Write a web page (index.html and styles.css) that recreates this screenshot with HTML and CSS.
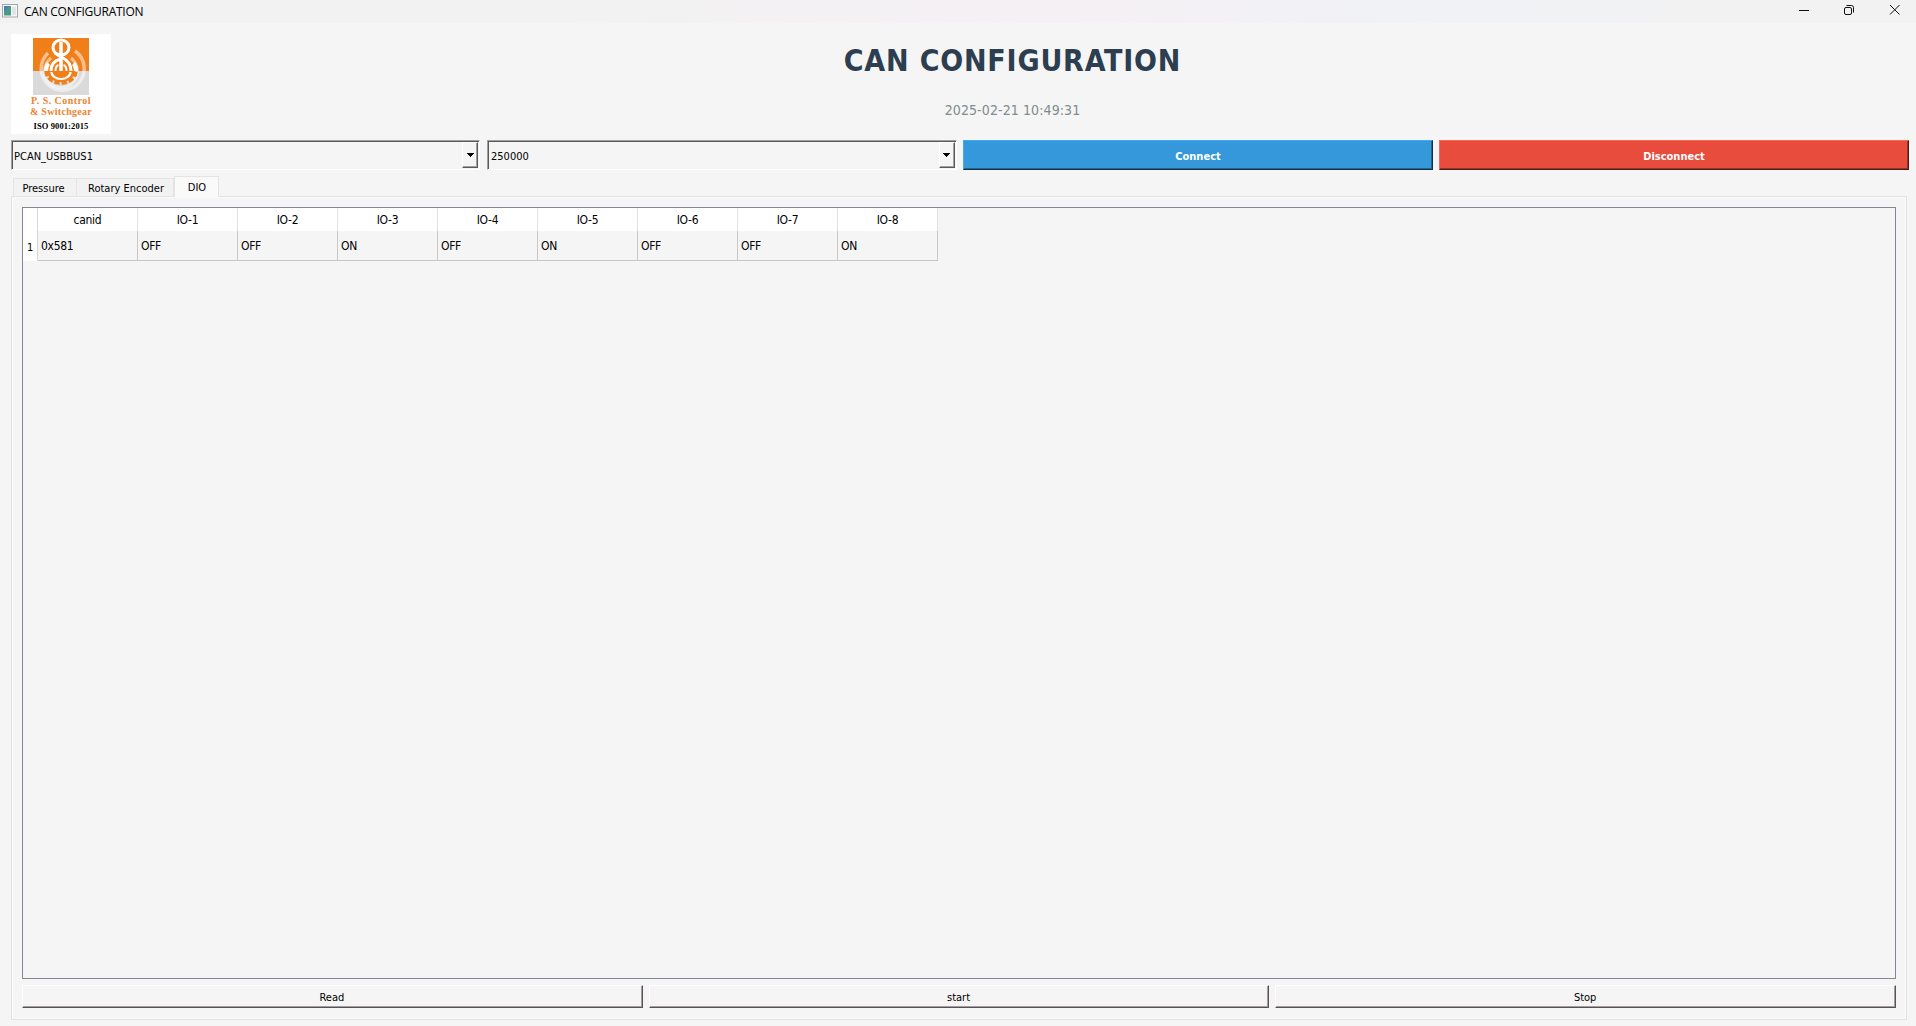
FILE: index.html
```
<!DOCTYPE html>
<html lang="en">
<head>
<meta charset="utf-8">
<title>CAN CONFIGURATION</title>
<link rel="stylesheet" href="styles.css">
</head>
<body>
<header class="titlebar">
  <svg class="app-icon" width="16" height="14" viewBox="0 0 16 14"><rect x=".5" y=".5" width="15" height="12.500" fill="#f7f7f7" stroke="#a3a8ad"/><rect x="2" y="2" width="7" height="9.500" fill="#4b9a86"/><path d="M2 2h5l-5 6z" fill="#4a7fb0"/><rect x="10" y="3" width="4" height="8" fill="#e0e4e2"/></svg>
  <span class="window-title">CAN CONFIGURATION</span>
  <svg class="controls" width="104" height="14" viewBox="0 0 104 14" fill="none" stroke="#111"><path d="M0 6.500h10"/><rect x="45.500" y="3.500" width="7" height="7" rx="1.500"/><path d="M47.500 1.500h5a2 2 0 0 1 2 2v5"/><path d="M91 1l9.500 9.500M100.500 1L91 10.500"/></svg>
</header>
<section class="banner">
  <div class="logo">
    <svg class="emblem" width="56" height="57" viewBox="0 0 56 57" fill="none">
      <path fill="#f07f1a" d="M0 0h56v33H0z"/><path fill="#dadada" d="M0 33h56v24H0z"/>
      <path d="M15 15a21.500 21.500 0 1 0 27-2" stroke="#fff" stroke-opacity=".5" stroke-width="3.500"/>
      <path d="M18 20a16.500 16.500 0 1 0 20 0" stroke="#fff" stroke-opacity=".5" stroke-width="3"/>
      <path d="M14 33a14 11 0 0 0 28 0z" fill="#f07f1a"/>
      <path d="M13.500 33a14.500 11.500 0 0 0 29 0" stroke="#f07f1a" stroke-width="4.500" stroke-dasharray="5 2"/>
      <path d="M13 33q0-5 2.500-7.500M43 33q0-5-2.500-7.500" stroke="#fff" stroke-width="4"/>
      <path d="M18.500 34a9.500 7 0 0 0 19 0" stroke="#fff" stroke-width="2.200"/>
      <ellipse cx="28" cy="9.500" rx="8" ry="7.500" stroke="#fff" stroke-width="3"/>
      <path d="M28 4v29" stroke="#fff" stroke-width="3.500"/>
      <path d="M22 15q4 3 8 5 8 4 8 13M28 21q-10 2-10 12" stroke="#fff" stroke-width="3"/>
      <path d="M22.500 33q0-5 3-6M33.500 33q0-5-3-6" stroke="#fff" stroke-width="2"/>
    </svg>
    <div class="brand"><span>P. S. Control</span><span class="second-line">&amp; Switchgear</span></div>
    <div class="iso">ISO 9001:2015</div>
  </div>
  <div class="heading"><h1><span>CAN CONFIGURATION</span></h1><time><span>2025-02-21 10:49:31</span></time></div>
</section>
<section class="connection">
  <div class="combo port"><span>PCAN_USBBUS1</span><i class="drop"><svg width="7" height="4" viewBox="0 0 7 4"><path d="M0 0h7v1H6v1H5v1H4v1H3V3H2V2H1V1H0z"/></svg></i></div>
  <div class="combo baud"><span>250000</span><i class="drop"><svg width="7" height="4" viewBox="0 0 7 4"><path d="M0 0h7v1H6v1H5v1H4v1H3V3H2V2H1V1H0z"/></svg></i></div>
  <button class="connect"><span>Connect</span></button>
  <button class="disconnect"><span>Disconnect</span></button>
</section>
<nav class="tabs"><div class="tab pressure"><span>Pressure</span></div><div class="tab rotary"><span>Rotary Encoder</span></div><div class="tab active"><span>DIO</span></div></nav>
<main class="pane">
  <div class="table-frame">
    <table>
      <thead><tr><th class="corner"></th><th><span>canid</span></th><th><span>IO-1</span></th><th><span>IO-2</span></th><th><span>IO-3</span></th><th><span>IO-4</span></th><th><span>IO-5</span></th><th><span>IO-6</span></th><th><span>IO-7</span></th><th><span>IO-8</span></th></tr></thead>
      <tbody><tr><th class="corner"><span>1</span></th><td>0x581</td><td>OFF</td><td>OFF</td><td>ON</td><td>OFF</td><td>ON</td><td>OFF</td><td>OFF</td><td>ON</td></tr></tbody>
    </table>
  </div>
  <div class="actions"><button><span>Read</span></button><button><span>start</span></button><button><span>Stop</span></button></div>
</main>
</body>
</html>
```
FILE: styles.css
```
* { box-sizing: border-box; }
body {
  margin: 0; height: 1026px; overflow: hidden; display: flex; flex-direction: column;
  background: #f5f5f5; color: #000;
  font: 11px/14px "DejaVu Sans Condensed", "DejaVu Sans", sans-serif; font-stretch: condensed;
}
.titlebar { height: 23px; display: flex; align-items: flex-start; padding: 4px 13px 0 2px; background: linear-gradient(90deg, #f2f2f2 0 30%, #f5f0f4 55%, #f0f2f6 75%, #f2f2f2 90%); }
.window-title { font: 12px/15px "Open Sans", "Noto Sans", sans-serif; margin-left: 6px; letter-spacing: -.25px; }
.controls { margin-left: auto; }
.banner { height: 111px; padding: 11px 7px 0 11px; display: flex; }
.logo { width: 100px; height: 100px; background: #fff; padding-top: 4px; display: flex; flex-direction: column; align-items: center; font-family: "Liberation Serif", serif; font-weight: bold; }
.emblem { flex: none; }
.brand { color: #ee8430; font-size: 10px; line-height: 11px; display: flex; flex-direction: column; align-items: center; letter-spacing: .45px; }
.second-line { letter-spacing: .3px; }
.iso { font-size: 8.5px; line-height: 9px; margin-top: 5px; letter-spacing: .1px; }
.heading { flex: 1; display: flex; flex-direction: column; align-items: center; padding-left: 5px; }
h1 { margin: 9px 0 0; color: #2c3e50; font-size: 30px; line-height: 36px; letter-spacing: .8px; }
time { margin-top: 21px; font-size: 14px; line-height: 20px; color: #7f8c8d; letter-spacing: .1px; }
.connection { margin-top: 6px; padding: 0 7px 0 11px; display: grid; grid-template-columns: repeat(4, 1fr); gap: 6px; height: 30px; }
.combo { display: flex; align-items: center; justify-content: space-between; border: 1px solid; border-color: #a0a0a0 #fff #fff #a0a0a0; box-shadow: inset 1px 1px #5a5a5a; padding: 1px 1px 1px 2px; }
.combo span { padding-top: 3px; }
.combo.port { margin-right: 1px; }
.combo.baud { padding-left: 3px; }
.drop { width: 16px; height: 26px; display: grid; place-items: center; padding-right: 1px; border: 1px solid; border-color: #fff #5a5a5a #5a5a5a #fff; box-shadow: inset -1px -1px #a0a0a0; }
.port .drop { padding-right: 0; }
button { font: inherit; color: #000; background: #f5f5f5; padding: 2px 1px 0 0; border: 1px solid; border-color: #fff #5a5055 #5a5055 #fff; box-shadow: inset -1px -1px #a0a0a0; }
.connect, .disconnect { color: #fff; font-weight: bold; padding: 3px 0 0; }
.connect { background: #3498db; border-color: #3eabf5 #142f42 #142f42 #3eabf5; box-shadow: inset -1px -1px #22658f; }
.disconnect { background: #e74c3c; border-color: #ff6455 #4a1a16 #4a1a16 #ff6455; box-shadow: inset -1px -1px #9b3328; }
.tabs { height: 26px; padding-left: 13px; display: flex; align-items: flex-end; }
.tab { height: 18px; display: grid; place-items: center; padding-top: 2px; border: 1px solid #e4e4e4; border-width: 1px 1px 0 0; background: #f2f2f2; }
.pressure { width: 64px; border-left-width: 1px; padding-right: 3px; }
.rotary { width: 97px; padding-left: 2px; }
.active { width: 45px; height: 21px; margin-bottom: -1px; border-left-width: 1px; background: #fafafa; z-index: 1; padding-left: 1px; }
.pane { margin: 0 9px 0 11px; width: 1896px; height: 824px; border: 1px solid #e3e3e3; box-shadow: inset 0 0 0 1px #fafafa; padding: 10px; display: flex; flex-direction: column; gap: 6px; }
.table-frame { height: 772px; border: 1px solid #828790; }
table { border-collapse: separate; border-spacing: 0; table-layout: fixed; width: 915px; font-size: 12px; letter-spacing: -.3px; }
th { font-weight: normal; background: #fff; height: 23px; width: 100px; padding: 1px 0 0; border-right: 1px solid #e2e2e2; text-align: center; }
th.corner { width: 15px; border-right-color: #d8d8d8; font-size: 11px; }
tbody th.corner { padding-top: 3px; }
td { height: 30px; padding: 0 0 0 3px; border: solid #c8c8c8; border-width: 0 1px 1px 0; }
.actions { display: grid; grid-template-columns: repeat(3, 1fr); gap: 6px; height: 23px; }
```
